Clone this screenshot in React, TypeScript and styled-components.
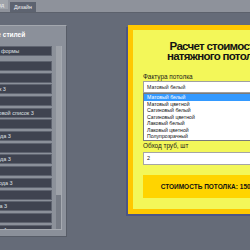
import React from 'react';
import styled, { createGlobalStyle } from 'styled-components';

const GlobalStyle = createGlobalStyle`
  html, body {
    margin: 0;
    padding: 0;
  }
  body {
    background: #656b78;
    font-family: "Liberation Sans", Arial, sans-serif;
    overflow: hidden;
  }
`;

const Screen = styled.div`
  width: 250px;
  height: 250px;
  overflow: hidden;
  background: #656b78;
`;

const TabBar = styled.div`
  height: 12px;
  background: #8e929b;
  border-bottom: 1px solid #5c616c;
  display: flex;
  align-items: flex-end;
  gap: 2px;
`;

const Tab = styled.div<{ $active?: boolean; $offset?: number }>`
  height: ${({ $active }) => ($active ? 10 : 9)}px;
  align-self: ${({ $active }) => ($active ? 'flex-end' : 'flex-start')};
  margin-left: ${({ $offset }) => $offset ?? 0}px;
  padding: 0 4px;
  background: ${({ $active }) => ($active ? '#5d6370' : '#a0a4ab')};
  color: #f2f3f5;
  font-size: 5.3px;
  line-height: 10px;
  white-space: nowrap;
`;

const Workspace = styled.div`
  display: flex;
  align-items: flex-start;
  padding-top: 12px;
`;

const SidePanel = styled.div`
  flex-shrink: 0;
  width: 127px;
  height: 212px;
  margin-left: -60px;
  box-sizing: border-box;
  padding: 4px 4px 6px 4px;
  background: #8b909a;
  border-top: 1px solid #a3a7ae;
  border-right: 1px solid #575c67;
  border-bottom: 1px solid #575c67;
  display: flex;
  flex-direction: column;
`;

const PanelTitle = styled.div`
  font-size: 6.5px;
  font-weight: 700;
  line-height: 9px;
  color: #ffffff;
  padding-left: 4px;
  margin-bottom: 7px;
  white-space: nowrap;
`;

const ListArea = styled.div`
  flex: 1;
  min-height: 0;
  display: flex;
  border-right: 1px solid #a6aab1;
  border-bottom: 1px solid #a6aab1;
`;

const Rows = styled.div`
  flex: 1;
  display: flex;
  flex-direction: column;
  gap: 1.7px;
  overflow: hidden;
`;

const StyleRow = styled.div<{ $first?: boolean }>`
  flex-shrink: 0;
  height: 10px;
  box-sizing: border-box;
  margin-bottom: ${({ $first }) => ($first ? 3.3 : 0)}px;
  padding-left: 3px;
  background: #3f4350;
  border: 1px solid #5f6470;
  color: #dfe1e5;
  font-size: 5.5px;
  line-height: 8px;
  white-space: nowrap;
  overflow: hidden;
`;

const Track = styled.div`
  width: 9px;
  flex-shrink: 0;
  box-sizing: border-box;
  padding-left: 4px;
  background: #8c919a;
  display: flex;
`;

const Rail = styled.div`
  width: 5px;
  background: #9ea2a9;
  display: flex;
  flex-direction: column;
  justify-content: flex-end;
`;

const Thumb = styled.div`
  height: 34px;
  background: #767b85;
`;

const Card = styled.div`
  flex-shrink: 0;
  width: 174px;
  margin-left: 61px;
  box-sizing: border-box;
  padding: 10px 10px 11px;
  background: #f3f759;
  border: 5px solid #ffc800;
  box-shadow: -2px 2px 0 #4d5584;
`;

const Title = styled.h1`
  margin: 0.5px 0 12.5px;
  font-size: 11.5px;
  font-weight: 700;
  line-height: 10px;
  letter-spacing: -0.7px;
  text-align: center;
  color: #141414;
`;

const FieldLabel = styled.div<{ $gap?: number }>`
  margin-top: ${({ $gap }) => $gap ?? 0}px;
  font-size: 6.4px;
  line-height: 8px;
  color: #1a1a1a;
  white-space: nowrap;
`;

const SelectBox = styled.div`
  height: 12px;
  box-sizing: border-box;
  padding-left: 3px;
  background: #ffffff;
  border: 1px solid #a0a0a0;
  font-size: 5.2px;
  line-height: 10px;
  color: #222222;
`;

const DropList = styled.div`
  background: #ffffff;
  border: 1px solid #7a7a7a;
`;

const Option = styled.div<{ $selected?: boolean }>`
  height: 6.5px;
  padding-left: 3px;
  font-size: 5.2px;
  line-height: 6.5px;
  white-space: nowrap;
  background: ${({ $selected }) => ($selected ? '#3399ff' : 'transparent')};
  color: ${({ $selected }) => ($selected ? '#ffffff' : '#111111')};
`;

const NumberInput = styled.div`
  margin-top: 2px;
  height: 13px;
  box-sizing: border-box;
  padding-left: 3px;
  background: #ffffff;
  border: 1px solid #a5a5a5;
  font-size: 5.5px;
  line-height: 11px;
  color: #222222;
`;

const TotalBar = styled.div`
  margin-top: 10px;
  height: 23px;
  background: #ffd400;
  display: flex;
  align-items: center;
  justify-content: center;
  font-size: 6.5px;
  font-weight: 700;
  color: #111111;
  white-space: nowrap;
`;

const styleItems = [
  'Заголовок основной формы',
  'Кнопка',
  'Поле ввода текста',
  'Выпадающий список 3',
  'Текстовый блок 2',
  'Выпадающий поисковой список 3',
  'Текстовый блок 3',
  'Поле текстового ввода 3',
  'Заголовок блока 3',
  'Поле текстового ввода 3',
  'Текстовый блок 5',
  'Поле числового вввода 3',
  'Текстовый блок 5',
  'Кнопка расчета итога 3',
  'Текстовый блок 7',
  'Кнопка расчета итога 1'
];

const textures = [
  'Матовый белый',
  'Матовый цветной',
  'Сатиновый белый',
  'Сатиновый цветной',
  'Лаковый белый',
  'Лаковый цветной',
  'Полупрозрачный'
];

export default function App() {
  return (
    <Screen>
      <GlobalStyle />
      <TabBar>
        <Tab $offset={-9}>Код</Tab>
        <Tab $active>Дизайн</Tab>
      </TabBar>
      <Workspace>
        <SidePanel>
          <PanelTitle>Редактирование стилей</PanelTitle>
          <ListArea>
            <Rows>
              {styleItems.map((name, i) => (
                <StyleRow key={i} $first={i === 0}>
                  {name}
                </StyleRow>
              ))}
            </Rows>
            <Track>
              <Rail>
                <Thumb />
              </Rail>
            </Track>
          </ListArea>
        </SidePanel>

        <Card>
          <Title>
            Расчет стоимости
            <br />
            натяжного потолка
          </Title>
          <FieldLabel>Фактура потолка</FieldLabel>
          <SelectBox>Матовый белый</SelectBox>
          <DropList role='listbox'>
            {textures.map((t, i) => (
              <Option key={t} $selected={i === 0}>
                {t}
              </Option>
            ))}
          </DropList>
          <FieldLabel $gap={1.5}>Обход труб, шт</FieldLabel>
          <NumberInput>2</NumberInput>
          <TotalBar>СТОИМОСТЬ ПОТОЛКА: 1500 руб.</TotalBar>
        </Card>
      </Workspace>
    </Screen>
  );
}
